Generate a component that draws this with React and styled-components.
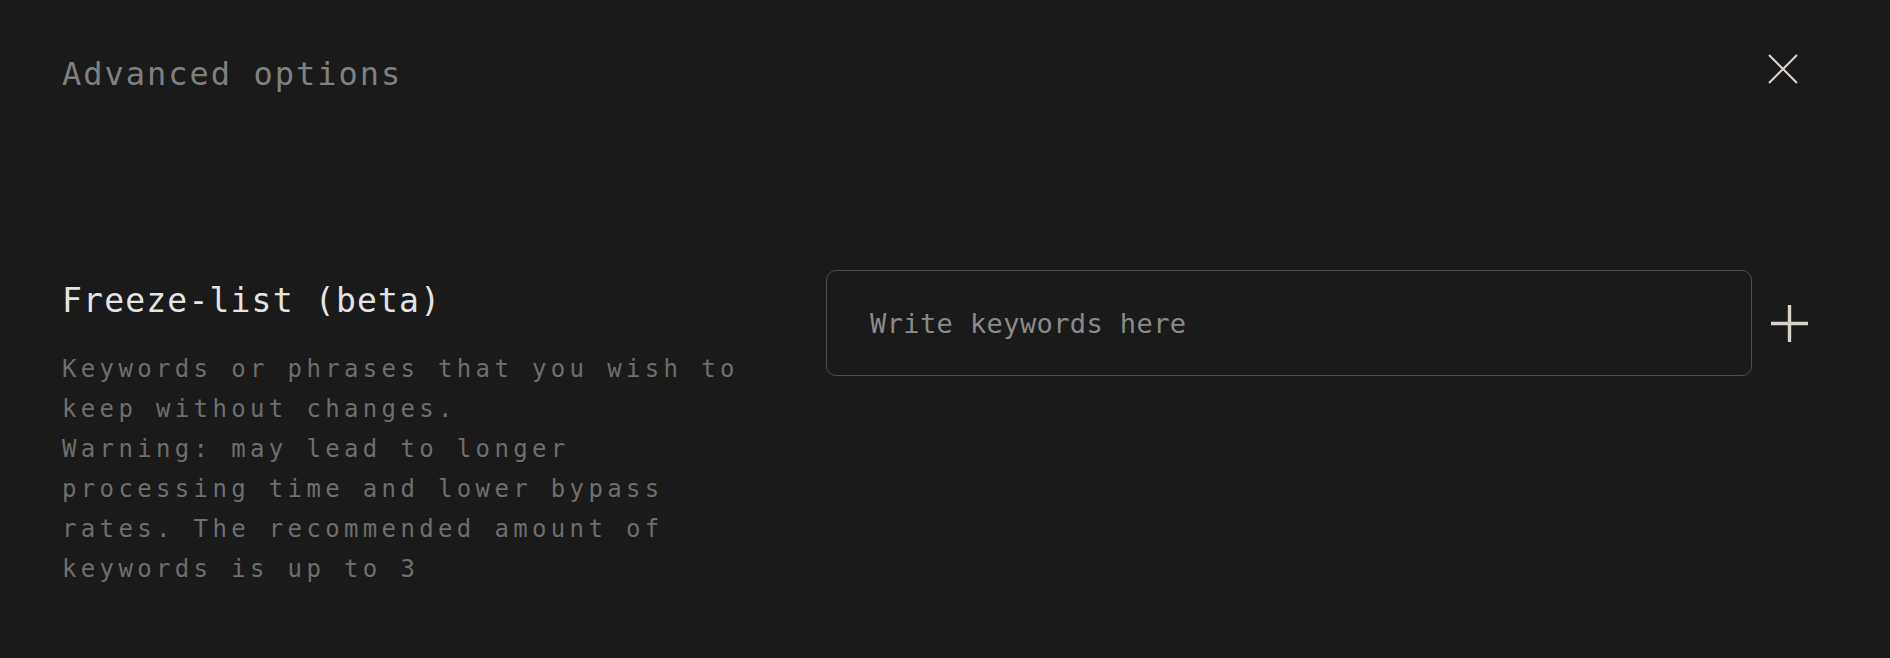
import React from "react";
import styled, { createGlobalStyle } from "styled-components";

const GlobalStyle = createGlobalStyle`
  html, body {
    margin: 0;
    padding: 0;
    background: #1a1a1a;
  }
  body {
    font-family: "DejaVu Sans Mono", "Liberation Mono", monospace;
  }
`;

const Page = styled.div`
  min-height: 100vh;
  box-sizing: border-box;
  padding: 54px 82px 0 62px;
  background: #1a1a1a;
`;

const Header = styled.div`
  display: flex;
  justify-content: space-between;
  align-items: flex-start;
`;

const Title = styled.h2`
  margin: 0;
  font-size: 32px;
  line-height: 40px;
  font-weight: 400;
  letter-spacing: 2px;
  color: #808080;
`;

const IconButton = styled.button`
  display: flex;
  align-items: center;
  justify-content: center;
  padding: 0;
  margin: ${(p) => p.$margin || "0"};
  width: ${(p) => p.$size}px;
  height: ${(p) => p.$size}px;
  background: none;
  border: none;
  color: #d9d2ca;
  cursor: pointer;
  flex-shrink: 0;
  svg {
    display: block;
  }
`;

const Row = styled.div`
  display: flex;
  align-items: flex-start;
  margin-top: 176px;
`;

const Info = styled.div`
  flex: 0 0 700px;
  margin-right: 64px;
  padding-top: 11px;
`;

const Label = styled.h3`
  margin: 0;
  font-size: 33px;
  line-height: 40px;
  font-weight: 400;
  letter-spacing: 1.2px;
  color: #e4e4e4;
`;

const Description = styled.p`
  margin: 28px 0 0;
  font-size: 24px;
  line-height: 40px;
  letter-spacing: 4.35px;
  color: #6e6e6e;
`;

const InputRow = styled.div`
  flex: 1;
  display: flex;
  align-items: center;
  gap: 19px;
`;

const KeywordInput = styled.input`
  flex: 1;
  min-width: 0;
  height: 106px;
  box-sizing: border-box;
  padding: 0 20px 0 43px;
  background: #1a1a1a;
  border: 1.5px solid #4e4e4e;
  border-radius: 10px;
  font-family: "DejaVu Sans Mono", "Liberation Mono", monospace;
  font-size: 27px;
  letter-spacing: 0.4px;
  color: #e6e6e6;
  outline: none;
  &::placeholder {
    color: #8a8a8a;
  }
`;

const CloseIcon = () => (
  <svg width="30" height="30" viewBox="0 0 30 30" fill="none">
    <path d="M1 1 L29 29 M29 1 L1 29" stroke="currentColor" strokeWidth="2.2" />
  </svg>
);

const PlusIcon = () => (
  <svg width="37" height="37" viewBox="0 0 37 37" fill="none">
    <path d="M18.5 0 V37 M0 18.5 H37" stroke="currentColor" strokeWidth="3.4" />
  </svg>
);

export default function App() {
  return (
    <>
      <GlobalStyle />
      <Page>
        <Header>
          <Title>Advanced options</Title>
          <IconButton $size={30} $margin="0 10px 0 0" aria-label="Close">
            <CloseIcon />
          </IconButton>
        </Header>
        <Row>
          <Info>
            <Label>Freeze-list (beta)</Label>
            <Description>
              Keywords or phrases that you wish to keep without changes.
              <br />
              Warning: may lead to longer processing time and lower bypass
              rates. The recommended amount of keywords is up to 3
            </Description>
          </Info>
          <InputRow>
            <KeywordInput placeholder="Write keywords here" />
            <IconButton $size={37} aria-label="Add keyword">
              <PlusIcon />
            </IconButton>
          </InputRow>
        </Row>
      </Page>
    </>
  );
}
